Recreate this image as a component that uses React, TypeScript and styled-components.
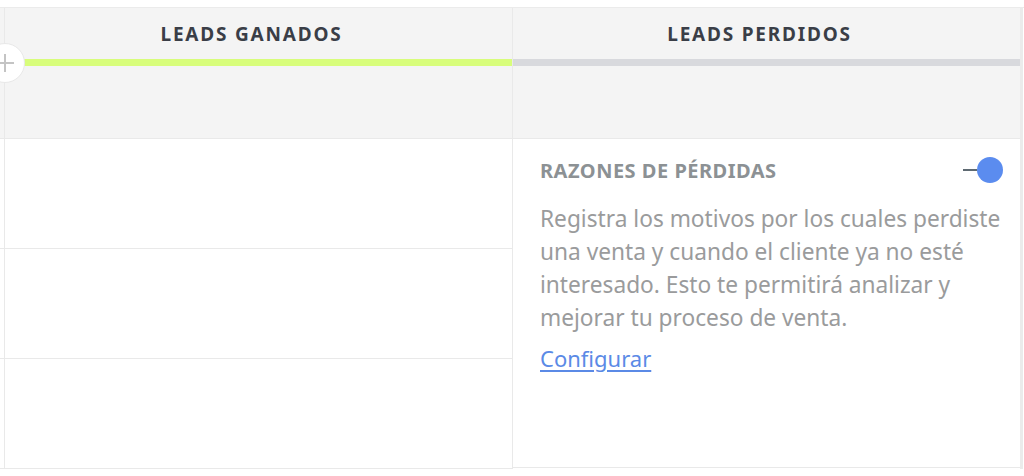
import styled, { createGlobalStyle } from 'styled-components';

const GlobalStyle = createGlobalStyle`
  html, body {
    margin: 0;
    padding: 0;
    background: #ffffff;
    font-family: "Noto Sans", "Open Sans", sans-serif;
  }
`;

const Page = styled.div`
  width: 1024px;
  height: 476px;
  overflow: hidden;
  padding-top: 7px;
  box-sizing: border-box;
`;

const Board = styled.div`
  display: flex;
  border-top: 1px solid #ebebeb;
`;

const Gutter = styled.div`
  width: 4px;
  flex-shrink: 0;
  display: flex;
  flex-direction: column;
`;

const GutterHead = styled.div`
  height: 130px;
  background: #f4f4f4;
  border-bottom: 1px solid #e9e9e9;
`;

const GutterCell = styled.div`
  height: 109px;
  border-bottom: 1px solid #e9e9e9;
`;

const Column = styled.div<{ $width: number }>`
  width: ${({ $width }) => $width}px;
  flex-shrink: 0;
  border-left: 1px solid #e9e9e9;
  display: flex;
  flex-direction: column;
  position: relative;
`;

const ColumnHeader = styled.div`
  height: 130px;
  background: #f4f4f4;
  border-bottom: 1px solid #e9e9e9;
  display: flex;
  flex-direction: column;
`;

const ColumnTitle = styled.div`
  height: 50px;
  display: flex;
  align-items: center;
  justify-content: center;
  padding-right: 14px;
  padding-top: 1px;
  font-size: 19px;
  font-weight: 700;
  letter-spacing: 1.8px;
  color: #3a3e47;
`;

const StageBar = styled.div<{ $color: string }>`
  height: 7px;
  background: ${({ $color }) => $color};
`;

const AddButton = styled.div`
  position: absolute;
  left: -20px;
  top: 35px;
  width: 38px;
  height: 38px;
  border-radius: 50%;
  background: #ffffff;
  border: 1px solid #e8e8e8;
  display: flex;
  align-items: center;
  justify-content: center;
`;

const Cell = styled.div`
  height: 109px;
  border-bottom: 1px solid #e9e9e9;
`;

const Panel = styled.div`
  height: 329px;
  border-bottom: 1px solid #e9e9e9;
  padding: 18px 10px 0 27px;
  box-sizing: border-box;
`;

const PanelHead = styled.div`
  display: flex;
  align-items: center;
  justify-content: space-between;
  height: 26px;
  padding-right: 7px;
`;

const PanelTitle = styled.div`
  font-size: 20px;
  font-weight: 700;
  color: #8c9194;
  letter-spacing: 0.5px;
`;

const Toggle = styled.div`
  display: flex;
  align-items: center;
`;

const ToggleTrack = styled.div`
  width: 14px;
  height: 2px;
  background: #5e6a72;
`;

const ToggleKnob = styled.div`
  width: 26px;
  height: 26px;
  border-radius: 50%;
  background: #5b8cef;
`;

const Description = styled.p`
  margin: 19px 0 0;
  font-size: 22.7px;
  line-height: 33px;
  color: #9a9b9c;
`;

const Link = styled.a`
  display: inline-block;
  margin-top: 8px;
  font-size: 22px;
  line-height: 33px;
  color: #5b8ae6;
  text-decoration: underline;
  text-underline-offset: 3px;
`;

const Scrollbar = styled.div`
  width: 3px;
  background: #ebebeb;
  flex-shrink: 0;
`;

const PlusIcon = () => (
  <svg width="20" height="20" viewBox="0 0 20 20">
    <path d="M10 1v18M1 10h18" stroke="#c4c4c4" strokeWidth="2" fill="none" />
  </svg>
);

const App = () => (
  <>
    <GlobalStyle />
    <Page>
      <Board>
        <Gutter>
          <GutterHead />
          <GutterCell />
          <GutterCell />
          <GutterCell />
        </Gutter>

        <Column $width={507}>
          <ColumnHeader>
            <ColumnTitle>LEADS GANADOS</ColumnTitle>
            <StageBar $color="#d8fd7b" />
          </ColumnHeader>
          <AddButton>
            <PlusIcon />
          </AddButton>
          <Cell />
          <Cell />
          <Cell />
        </Column>

        <Column $width={507}>
          <ColumnHeader>
            <ColumnTitle>LEADS PERDIDOS</ColumnTitle>
            <StageBar $color="#d8d9dd" />
          </ColumnHeader>
          <Panel>
            <PanelHead>
              <PanelTitle>RAZONES DE PÉRDIDAS</PanelTitle>
              <Toggle>
                <ToggleTrack />
                <ToggleKnob />
              </Toggle>
            </PanelHead>
            <Description>
              Registra los motivos por los cuales perdiste una venta y cuando el cliente ya no esté
              interesado. Esto te permitirá analizar y mejorar tu proceso de venta.
            </Description>
            <Link href="#">Configurar</Link>
          </Panel>
        </Column>

        <Scrollbar />
      </Board>
    </Page>
  </>
);

export default App;
